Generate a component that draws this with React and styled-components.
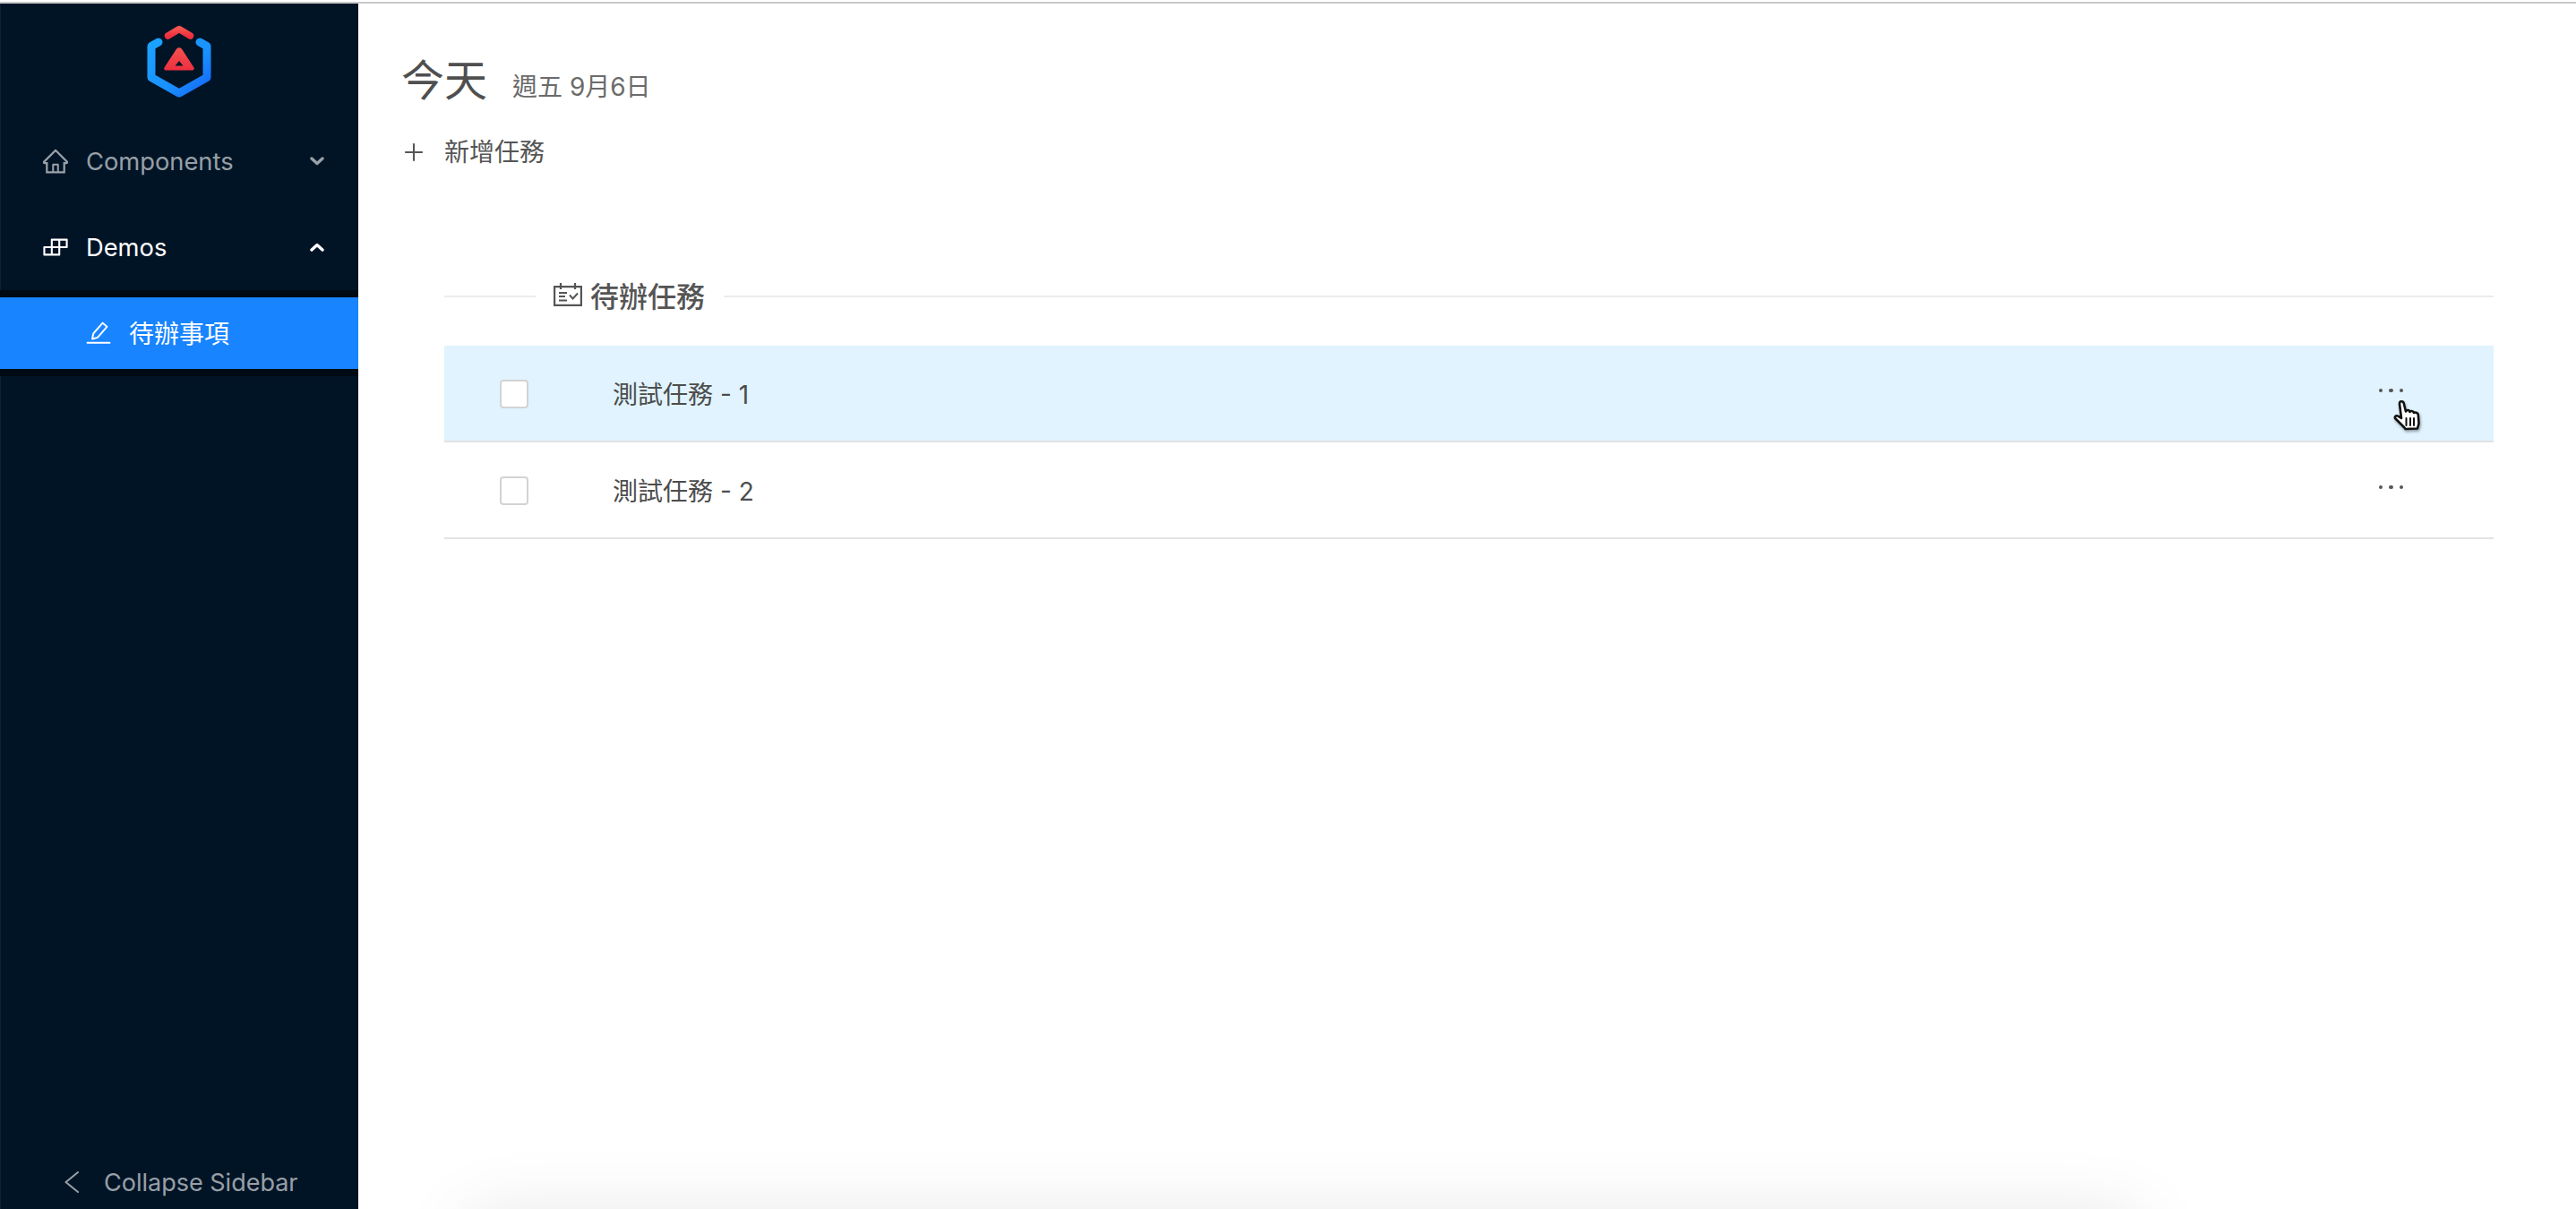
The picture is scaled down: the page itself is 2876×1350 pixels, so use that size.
import React from 'react';
import styled, { createGlobalStyle } from 'styled-components';
import { AiOutlineHome, AiOutlineBuild, AiOutlinePlus } from 'react-icons/ai';

const FONT = `Inter, "Noto Sans CJK TC", "Noto Sans", sans-serif`;

const Global = createGlobalStyle`
  html, body { margin: 0; padding: 0; height: 100%; background: #fff; overflow: hidden; }
  body { font-family: ${FONT}; }
  #root { height: 100%; }
`;

const Page = styled.div`
  position: relative;
  width: 2876px;
  height: 1350px;
  overflow: hidden;
  display: flex;
  flex-direction: column;
  background: #fff;
`;

const TopRule = styled.div`
  height: 2px;
  margin-top: 2px;
  background: #c9c9c9;
  flex: none;
`;

const Body = styled.div`
  flex: 1;
  display: flex;
  min-height: 0;
`;

const Sidebar = styled.aside`
  width: 400px;
  flex: none;
  box-sizing: border-box;
  background: #011426;
  box-shadow: inset 1px 0 #0c2135;
  display: flex;
  flex-direction: column;
`;

const Logo = styled.div`
  height: 120px;
  display: flex;
  justify-content: center;
  padding-top: 22px;
  box-sizing: border-box;
`;

const Nav = styled.nav`
  flex: 1;
  padding-top: 8px;
  display: flex;
  flex-direction: column;
`;

const MenuItem = styled.div`
  height: 96px;
  display: flex;
  align-items: center;
  padding: 0 38px 0 46px;
  gap: 18px;
  font-size: 27.3px;
  color: ${p => (p.$open ? '#fff' : 'rgba(255,255,255,.6)')};
  svg.lead { font-size: 32px; flex: none; }
`;

const MenuLabel = styled.span`
  flex: 1;
`;

const SubMenu = styled.div`
  background: #000a14;
  padding: 8px 0;
`;

const SubItem = styled.div`
  height: 80px;
  box-sizing: border-box;
  background: #1884ff;
  display: flex;
  align-items: center;
  padding: 0 0 2px 96px;
  gap: 20px;
  color: #fff;
  font-size: 28px;
`;

const Collapse = styled.div`
  height: 60px;
  display: flex;
  align-items: center;
  padding-left: 72px;
  gap: 28px;
  color: rgba(255,255,255,.6);
  font-size: 27px;
`;

const Main = styled.main`
  flex: 1;
  min-width: 0;
  padding: 56px 92px 0 48px;
  display: flex;
  flex-direction: column;
  color: #555;
`;

const Heading = styled.div`
  display: flex;
  align-items: baseline;
  gap: 28px;
  height: 60px;
`;

const Title = styled.h1`
  margin: 0;
  font-size: 48px;
  line-height: 60px;
  font-weight: 400;
  color: #4f4f4f;
`;

const DateText = styled.span`
  font-size: 28px;
  color: #6b6b6b;
`;

const AddTask = styled.div`
  margin-top: 30px;
  display: flex;
  align-items: center;
  gap: 20px;
  font-size: 28px;
  line-height: 40px;
  color: #555;
  svg { font-size: 28px; }
`;

const Section = styled.section`
  margin-top: 115px;
  margin-left: 48px;
  display: flex;
  flex-direction: column;
`;

const SectionHead = styled.div`
  display: flex;
  align-items: center;
  height: 52px;
  margin-bottom: 29px;
  &::before, &::after {
    content: '';
    height: 2px;
    background: #ececec;
  }
  &::before { width: 102px; }
  &::after { flex: 1; }
`;

const SectionTitle = styled.div`
  display: flex;
  align-items: center;
  gap: 9px;
  padding: 0 21px 4px 20px;
  font-size: 32px;
  font-weight: 500;
  color: #555;
`;

const Row = styled.div`
  position: relative;
  height: 106px;
  display: flex;
  align-items: center;
  padding: 0 52px 0 62px;
  border-bottom: 2px solid #e3e3e3;
  background: ${p => (p.$hover ? '#e0f3fe' : '#fff')};
`;

const Check = styled.span`
  width: 32px;
  height: 32px;
  flex: none;
  box-sizing: border-box;
  background: #fff;
  border: 2px solid #d3d3d3;
  border-radius: 4px;
  margin-top: 2px;
`;

const TaskName = styled.span`
  flex: 1;
  margin-left: 94px;
  font-size: 28px;
  color: #4d4d4d;
`;

const More = styled.span`
  display: flex;
  gap: 7px;
  margin-top: -6px;
  margin-right: 49px;
`;

const Dot = styled.i`
  width: 4.5px;
  height: 4.5px;
  border-radius: 50%;
  background: #555;
`;

const Pointer = styled.svg`
  position: absolute;
  left: 2176px;
  top: 60px;
  width: 32px;
  height: 36px;
  pointer-events: none;
  filter: drop-shadow(1px 2px 1.5px rgba(0,0,0,.35));
`;

const BottomGlow = styled.div`
  position: absolute;
  left: 520px;
  width: 1870px;
  top: 1356px;
  height: 100px;
  border-radius: 20px;
  box-shadow: 0 0 80px rgba(0,0,0,.1);
  background: #eee;
`;

const Arrow = ({ up }) => (
  <svg width="16" height="10" viewBox="0 0 16 10" fill="none" stroke="currentColor" strokeWidth="3.4" strokeLinecap="round" strokeLinejoin="round" style={{ flex: 'none' }}>
    <path d={up ? 'M2 8L8 2.5L14 8' : 'M2 2L8 7.5L14 2'} />
  </svg>
);

const LeftChevron = () => (
  <svg width="16" height="24" viewBox="0 0 16 24" fill="none" stroke="currentColor" strokeWidth="2" strokeLinecap="round" strokeLinejoin="round" style={{ flex: 'none' }}>
    <path d="M15 1L1.5 12L15 23" />
  </svg>
);

const LogoMark = () => (
  <svg viewBox="164 26 72 84" fill="none" style={{ width: 72, height: 84 }}>
    <defs>
      <linearGradient id="hexBlue" x1="0" y1="0" x2="1" y2="1">
        <stop offset="0" stopColor="#1ba3ff" />
        <stop offset="0.6" stopColor="#1a90ff" />
        <stop offset="1" stopColor="#1565f5" />
      </linearGradient>
      <linearGradient id="hexRed" x1="0" y1="0" x2="0" y2="1">
        <stop offset="0" stopColor="#f4524f" />
        <stop offset="1" stopColor="#ee2f3e" />
      </linearGradient>
    </defs>
    <path d="M177 47L169 51.5V86.5L200 104L231 86.5V51.5L223 47" stroke="url(#hexBlue)" strokeWidth="9" strokeLinecap="round" strokeLinejoin="round" />
    <path d="M187.5 40L200 32.5L212.5 40" stroke="url(#hexRed)" strokeWidth="7.5" strokeLinecap="round" strokeLinejoin="round" />
    <path fillRule="evenodd" clipRule="evenodd" fill="url(#hexRed)" d="M196.8 55C198.2 52.6 201.8 52.6 203.2 55L216.4 75.2C217.4 76.7 216.4 78.5 214.6 78.5H185.4C183.6 78.5 182.6 76.7 183.6 75.2ZM200 68L195.5 73.5H204.5Z" />
  </svg>
);

const Pencil = () => (
  <svg width="28" height="28" viewBox="0 0 28 28" fill="none" stroke="currentColor" strokeWidth="1.9" strokeLinejoin="round" style={{ flex: 'none' }}>
    <path d="M7 21.5L8.2 15.5L18.6 3.6L23.4 7.8L13 19.8Z" />
    <path d="M1.5 25.8H26.5" strokeLinecap="round" />
  </svg>
);

const CalendarCheck = () => (
  <svg width="32" height="26" viewBox="0 0 32 26" fill="none" stroke="currentColor" strokeWidth="2.2" style={{ flex: 'none' }}>
    <path d="M1.1 4.1H30.9V24.9H1.1Z" />
    <path d="M8 0V7M24 0V7" />
    <path d="M6 11H15M6 15H13M6 19.5H15" strokeWidth="1.9" />
    <path d="M18 13.5L21.5 17.5L27 11.5" strokeWidth="2" />
  </svg>
);

const Hand = () => (
  <Pointer viewBox="0 0 32 36">
    <path fill="#fff" stroke="#111" strokeWidth="2.6" strokeLinejoin="round"
      d="M12 31C9 28 6 25 2.5 21.5C1 20 2.5 17.5 5 18.5L9 21L7 5C6.8 1.5 11 1.2 11.8 4.5L14 13.5C14.5 11.5 18 11.5 18.5 14C19 12.5 22.5 12.7 23 15C24 14 27.5 14.5 27.8 17L28.5 26C28.6 28 27.5 30 27 32.5L13.5 33Z" />
    <path stroke="#111" strokeWidth="2" strokeLinecap="round" d="M14.5 21V29M19 21V29M23 21V29" />
  </Pointer>
);

const Task = ({ name, hover }) => (
  <Row $hover={hover}>
    <Check />
    <TaskName>{name}</TaskName>
    <More><Dot /><Dot /><Dot /></More>
    {hover && <Hand />}
  </Row>
);

export default function App() {
  return (
    <Page>
      <Global />
      <TopRule />
      <Body>
        <Sidebar>
          <Logo><LogoMark /></Logo>
          <Nav>
            <MenuItem>
              <AiOutlineHome className="lead" />
              <MenuLabel>Components</MenuLabel>
              <Arrow />
            </MenuItem>
            <MenuItem $open>
              <AiOutlineBuild className="lead" />
              <MenuLabel>Demos</MenuLabel>
              <Arrow up />
            </MenuItem>
            <SubMenu>
              <SubItem><Pencil />待辦事項</SubItem>
            </SubMenu>
          </Nav>
          <Collapse><LeftChevron />Collapse Sidebar</Collapse>
        </Sidebar>
        <Main>
          <Heading>
            <Title>今天</Title>
            <DateText>週五 9月6日</DateText>
          </Heading>
          <AddTask><AiOutlinePlus />新增任務</AddTask>
          <Section>
            <SectionHead>
              <SectionTitle><CalendarCheck />待辦任務</SectionTitle>
            </SectionHead>
            <Task name="測試任務 - 1" hover />
            <Task name="測試任務 - 2" />
          </Section>
        </Main>
      </Body>
      <BottomGlow />
    </Page>
  );
}
